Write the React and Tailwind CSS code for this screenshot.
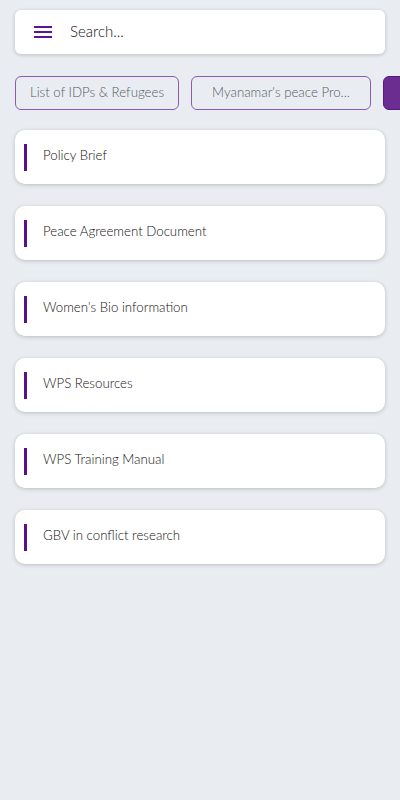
import React from 'react';

const CHIPS = [
  { label: 'List of IDPs & Refugees', w: 'w-[164px]' },
  { label: "Myanamar's peace Pro...", w: 'w-[180px]' },
  { label: 'Peace Process', w: 'w-[140px]', active: true },
];

const ITEMS = [
  'Policy Brief',
  'Peace Agreement Document',
  "Women's Bio information",
  'WPS Resources',
  'WPS Training Manual',
  'GBV in conflict research',
];

function MenuIcon() {
  return (
    <svg width="18" height="14" viewBox="0 0 18 14" className="shrink-0">
      <rect x="0" y="1" width="18" height="2" fill="#5b168f" />
      <rect x="0" y="6" width="18" height="2" fill="#5b168f" />
      <rect x="0" y="11" width="18" height="2" fill="#5b168f" />
    </svg>
  );
}

export default function App() {
  return (
    <div className="w-[400px] h-[800px] bg-[#e9edf1] overflow-hidden" style={{ fontFamily: 'Lato, "Noto Sans", sans-serif' }}>
      {/* search */}
      <div className="px-[15px] pt-[10px]">
        <div className="h-[44px] bg-white rounded-[6px] shadow-[0_1px_4px_rgba(0,0,0,0.2)] flex items-center pl-[19px] gap-[18px]">
          <MenuIcon />
          <span className="text-[15px] font-light text-[#111] -mt-[2px]">Search...</span>
        </div>
      </div>

      {/* chips */}
      <div className="flex gap-[12px] pl-[15px] mt-[22px] overflow-hidden">
        {CHIPS.map(c => (
          <div
            key={c.label}
            className={`${c.w} shrink-0 h-[34px] rounded-[6px] border flex items-center justify-center text-[13.25px] font-light ${
              c.active ? 'bg-[#6c2d93] border-[#561882] text-white' : 'border-[#8c5cb0] text-[#555a60]'
            }`}
          >
            {c.label}
          </div>
        ))}
      </div>

      {/* list */}
      <div className="flex flex-col gap-[22px] px-[15px] mt-[20px]">
        {ITEMS.map(t => (
          <div key={t} className="h-[54px] bg-white rounded-[10px] shadow-[0_1px_4px_rgba(0,0,0,0.2)] flex items-center pl-[9px]">
            <div className="w-[3px] h-[27px] bg-[#5a0f8c]" />
            <span className="ml-[16px] text-[13.25px] font-light text-[#111] -mt-[2px]">{t}</span>
          </div>
        ))}
      </div>
    </div>
  );
}
